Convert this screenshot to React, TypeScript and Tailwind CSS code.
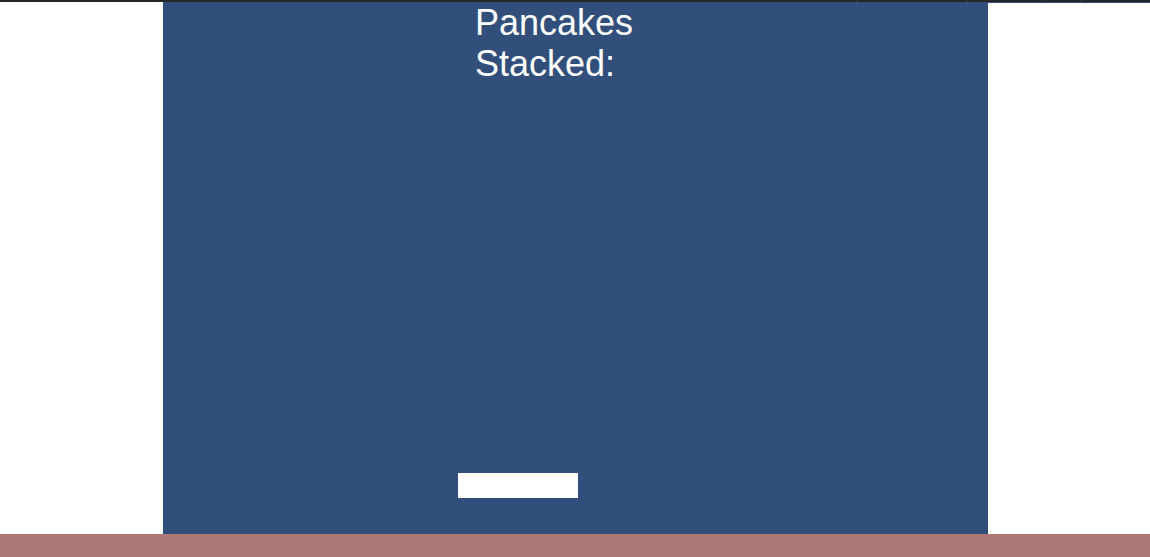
export default function App() {
  return (
    <div className="flex h-[557px] w-[1150px] flex-col overflow-hidden bg-white" style={{ fontFamily: '"Liberation Sans", Arial, sans-serif' }}>
      {/* window strip with tab separators */}
      <div className="flex h-[2px] bg-[#262626]">
        <div className="w-[857px] border-r border-[#3a3a3a]" />
        <div className="w-[111px] border-r border-[#3a3a3a]" />
        <div className="w-[75px] border-r border-[#3a3a3a]" />
        <div className="w-[38px] border-r border-[#3a3a3a]" />
        <div className="flex-1" />
      </div>

      <div className="flex flex-1">
        <div className="w-[163px]" />

        {/* game panel */}
        <div className="flex w-[825px] flex-col bg-[#314f7a]">
          <div className="flex justify-start pl-[312px]">
            <p className="w-[200px] text-[36px] leading-[41px] text-white">Pancakes Stacked:</p>
          </div>
          <div className="flex-1" />
          <div className="pl-[295px] pb-[36px]">
            <div className="h-[25px] w-[120px] bg-white" />
          </div>
        </div>

        <div className="flex flex-1 flex-col">
          <div className="h-px bg-[#314f7a]" />
        </div>
      </div>

      <div className="h-[23px] bg-[#ad7775]" />
    </div>
  )
}
